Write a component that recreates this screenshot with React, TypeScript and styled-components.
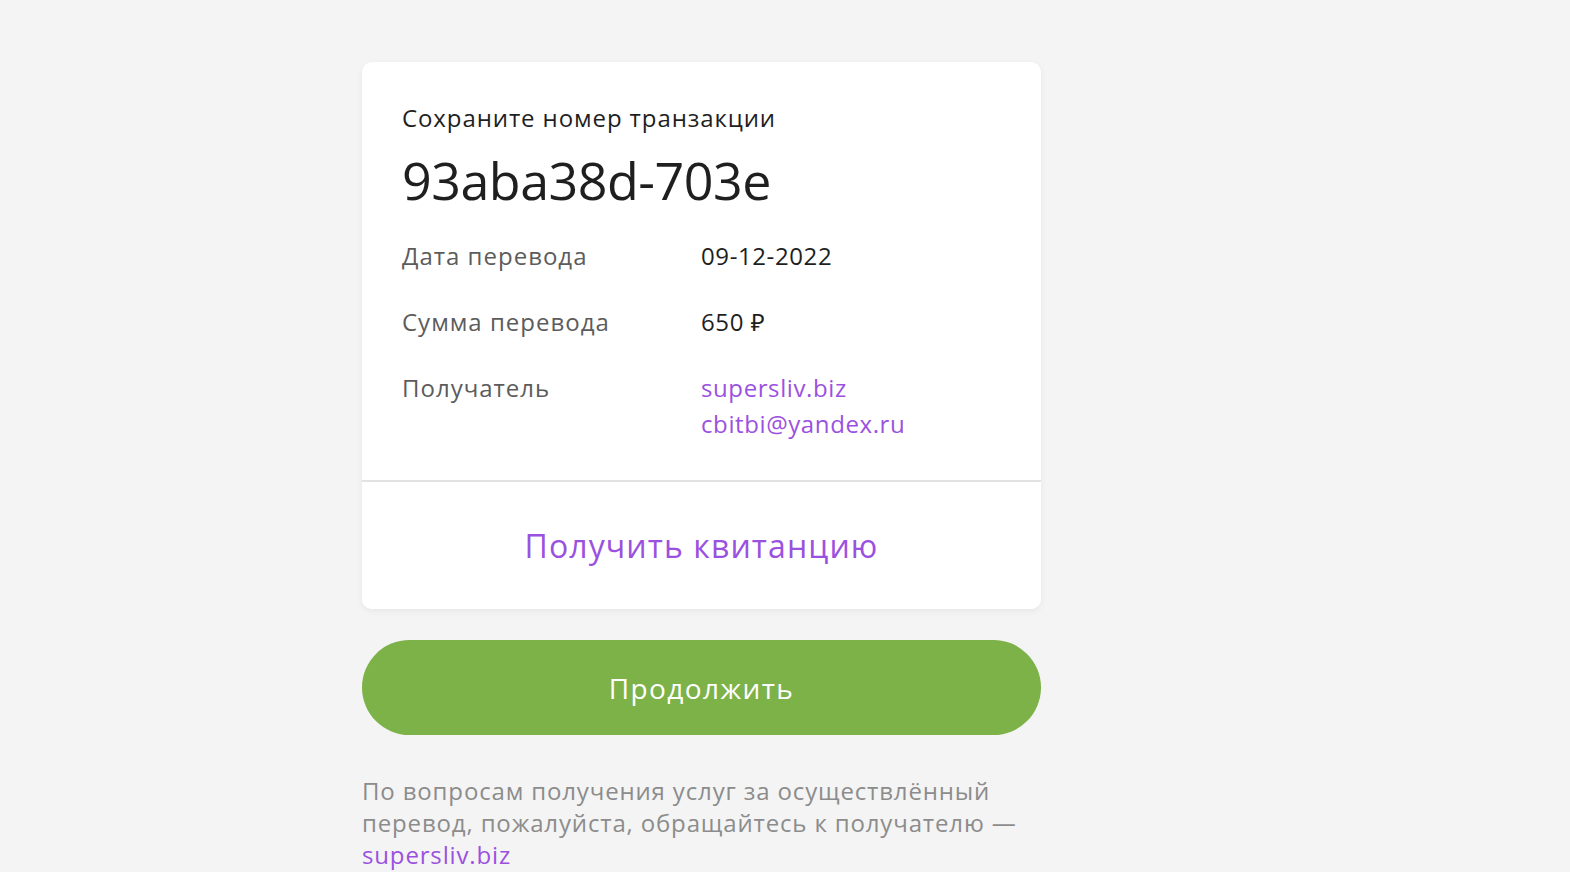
import * as React from "react";
import styled, { createGlobalStyle } from "styled-components";

const GlobalStyle = createGlobalStyle`
  html, body {
    margin: 0;
    padding: 0;
    background: #f4f4f4;
  }
  body {
    font-family: "Open Sans", "Noto Sans", sans-serif;
    -webkit-font-smoothing: antialiased;
  }
`;

const colors = {
  text: "#1f1f1f",
  label: "#5c5c5c",
  purple: "#9b51e0",
  green: "#7db249",
  muted: "#8c8c8c",
};

const Page = styled.div`
  min-height: 872px;
  padding: 62px 0 0 362px;
  box-sizing: border-box;
`;

const Column = styled.div`
  width: 679px;
  display: flex;
  flex-direction: column;
`;

const Card = styled.div`
  background: #fff;
  border-radius: 10px;
  box-shadow: 0 2px 6px rgba(0, 0, 0, 0.06);
  overflow: hidden;
`;

const CardBody = styled.div`
  padding: 38px 40px 38px;
  border-bottom: 2px solid #e2e2e2;
`;

const Caption = styled.div`
  font-size: 24px;
  line-height: 36px;
  color: ${colors.text};
  letter-spacing: 0.9px;
`;

const TxId = styled.div`
  font-size: 52px;
  font-weight: 400;
  line-height: 64px;
  margin-top: 12px;
  margin-bottom: 26px;
  color: ${colors.text};
  letter-spacing: -0.5px;
`;

const Row = styled.div`
  display: grid;
  grid-template-columns: 299px 1fr;
  font-size: 24px;
  line-height: 36px;
  letter-spacing: 1px;
  & + & {
    margin-top: 30px;
  }
`;

const Label = styled.div`
  color: ${colors.label};
`;

const Value = styled.div<{ $link?: boolean }>`
  color: ${(p) => (p.$link ? colors.purple : colors.text)};
  letter-spacing: 0.6px;
  display: flex;
  flex-direction: column;
`;

const ReceiptButton = styled.button`
  display: block;
  width: 100%;
  height: 127px;
  border: none;
  background: #fff;
  color: ${colors.purple};
  font-family: inherit;
  font-size: 32px;
  letter-spacing: 1.1px;
  cursor: pointer;
`;

const ContinueButton = styled.button`
  margin-top: 31px;
  height: 95px;
  border: none;
  border-radius: 48px;
  background: ${colors.green};
  color: #fff;
  font-family: inherit;
  font-size: 28px;
  letter-spacing: 1.4px;
  cursor: pointer;
`;

const Note = styled.p`
  margin: 40px 0 0;
  font-size: 24px;
  line-height: 32px;
  color: ${colors.muted};
  letter-spacing: 0.85px;
`;

const Link = styled.a`
  color: ${colors.purple};
  text-decoration: none;
`;

const rows = [
  { label: "Дата перевода", values: ["09-12-2022"] },
  { label: "Сумма перевода", values: ["650 ₽"] },
  { label: "Получатель", values: ["supersliv.biz", "cbitbi@yandex.ru"], link: true },
];

const App = () => {
  return (
    <Page>
      <GlobalStyle />
      <Column>
        <Card>
          <CardBody>
            <Caption>Сохраните номер транзакции</Caption>
            <TxId>93aba38d-703e</TxId>
            {rows.map((row) => (
              <Row key={row.label}>
                <Label>{row.label}</Label>
                <Value $link={row.link}>
                  {row.values.map((v) => (
                    <span key={v}>{v}</span>
                  ))}
                </Value>
              </Row>
            ))}
          </CardBody>
          <ReceiptButton>Получить квитанцию</ReceiptButton>
        </Card>
        <ContinueButton>Продолжить</ContinueButton>
        <Note>
          По вопросам получения услуг за осуществлённый перевод, пожалуйста,
          обращайтесь к получателю — <Link href="#">supersliv.biz</Link>
        </Note>
      </Column>
    </Page>
  );
};

export default App;
